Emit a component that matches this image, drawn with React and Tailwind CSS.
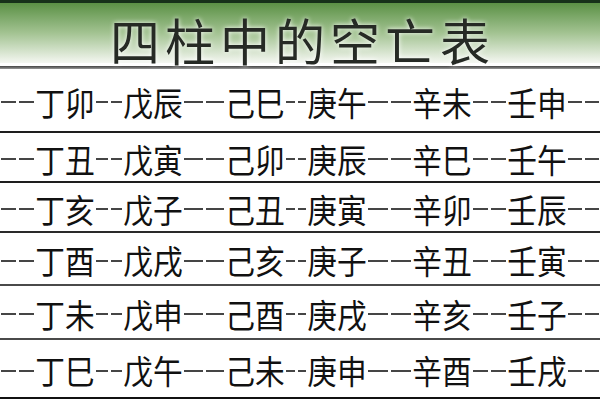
const rows = [
  ["丁卯", "戊辰", "己巳", "庚午", "辛未", "壬申"],
  ["丁丑", "戊寅", "己卯", "庚辰", "辛巳", "壬午"],
  ["丁亥", "戊子", "己丑", "庚寅", "辛卯", "壬辰"],
  ["丁酉", "戊戌", "己亥", "庚子", "辛丑", "壬寅"],
  ["丁未", "戊申", "己酉", "庚戌", "辛亥", "壬子"],
  ["丁巳", "戊午", "己未", "庚申", "辛酉", "壬戌"],
];

const heights = ["h-[62px]", "h-[48px]", "h-[48px]", "h-[51px]", "h-[52px]", "h-[57px]"];
const lines = ["bg-[#1e1e1e]", "bg-[#1e1e1e]", "bg-[#2a2a2a]", "bg-[#4a4a4a]", "bg-[#4a4a4a]", "bg-[#111]"];

function Dash() {
  return (
    <div className="flex gap-[3px] px-[1px]">
      <div className="flex-1 h-[2px] bg-[#454545]" />
      <div className="flex-1 h-[2px] bg-[#454545]" />
    </div>
  );
}

function Pair({ text }) {
  return (
    <div className="flex justify-center overflow-visible">
      <span className="whitespace-nowrap text-[33px] leading-none text-[#111] scale-x-[0.9]">{text}</span>
    </div>
  );
}

export default function App() {
  return (
    <div className="w-[600px] h-[400px] bg-white overflow-hidden font-['Noto_Sans_CJK_SC','Noto_Sans_CJK_JP',sans-serif]">
      {/* title bar */}
      <div className="h-[3px] bg-[#17321a]" />
      <div className="h-[60px] bg-gradient-to-b from-[#5b9145] via-[#a3c392] to-[#f5f7f2] flex justify-center">
        <h1 className="pt-[11px] pl-[5px] text-[50px] leading-none tracking-[5px] text-[#262a25] [text-shadow:0_0_5px_#ffffff]">
          四柱中的空亡表
        </h1>
      </div>
      <div className="h-[3px] bg-white" />
      <div className="h-[3px] bg-gradient-to-b from-[#444] to-[#999]" />

      {rows.map((r, i) => (
        <div key={i}>
          <div className={`${heights[i]} grid grid-cols-[35px_60px_28px_60px_42px_60px_22px_60px_45px_60px_35px_60px_1fr] items-center pt-[4px]`}>
            <Dash />
            {r.map((p, j) => (
              <div key={j} className="contents">
                <Pair text={p} />
                <Dash />
              </div>
            ))}
          </div>
          <div className={`h-[2px] ${lines[i]}`} />
        </div>
      ))}
    </div>
  );
}
